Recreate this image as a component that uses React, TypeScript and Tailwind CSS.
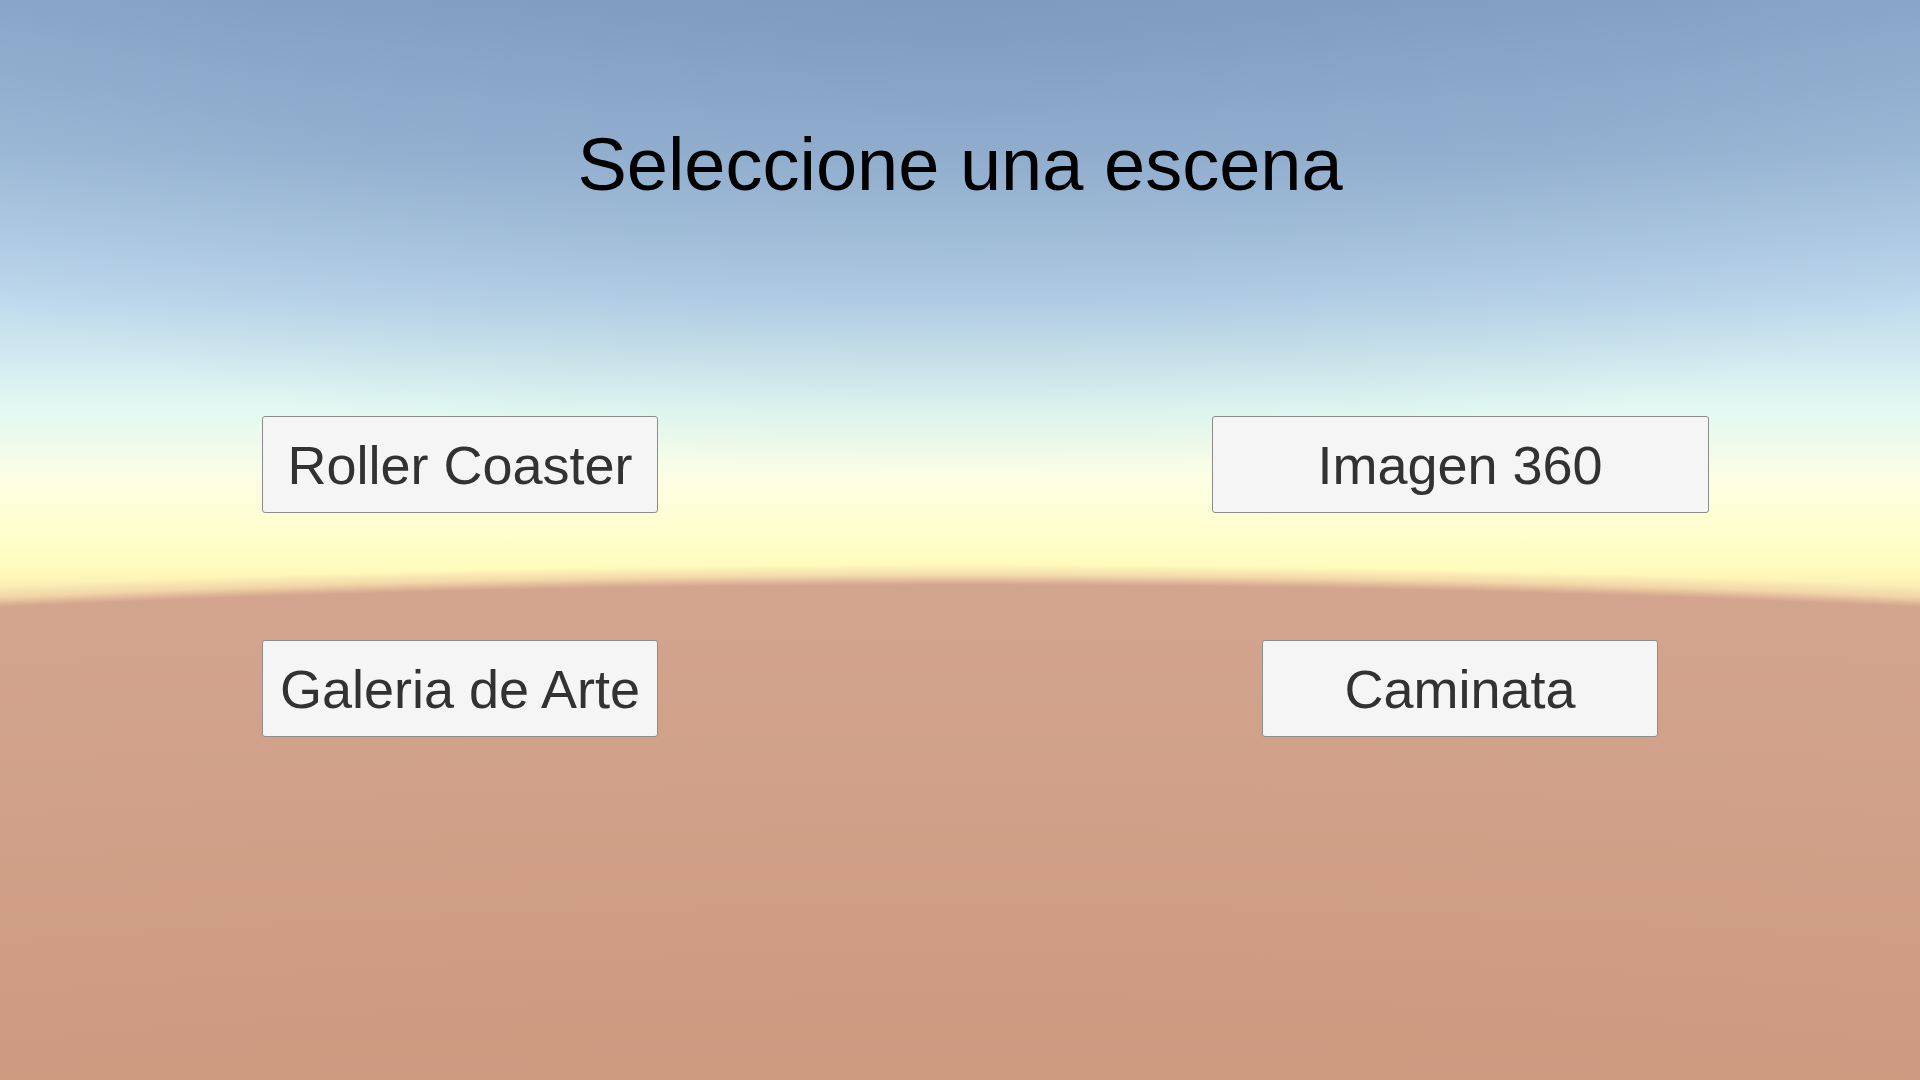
const scenes = [
  { label: "Roller Coaster", width: "w-[396px]" },
  { label: "Imagen 360", width: "w-[497px]" },
  { label: "Galeria de Arte", width: "w-[396px]" },
  { label: "Caminata", width: "w-[396px]" },
];

function SceneButton({ label, width }: { label: string; width: string }) {
  return (
    <button
      className={`${width} h-[97px] flex items-center justify-center rounded-[3px] border border-[#8c8c8c] bg-[#f5f5f5] text-[54px] leading-none text-[#323232]`}
    >
      {label}
    </button>
  );
}

export default function App() {
  return (
    <div
      className="h-[1080px] w-full overflow-hidden flex flex-col items-center pt-[128px] font-['Liberation_Sans',Arial,sans-serif] bg-[radial-gradient(ellipse_4100px_800px_at_50%_1385px,#cc9a7f_38%,#d3a48e_98%,#d3a48e_100%,rgba(240,208,165,0.75)_101.2%,rgba(250,225,175,0)_102.6%),radial-gradient(ellipse_1300px_470px_at_50%_0px,rgba(70,100,150,0.25)_0%,rgba(70,100,150,0.16)_55%,rgba(70,100,150,0)_100%),linear-gradient(to_bottom,#90accd_0px,#a2bedb_150px,#bfdaed_300px,#e2f9f2_410px,#fbfde4_475px,#fffecb_540px,#fffbbb_570px,#f5dcaa_610px,#f5dcaa_100%)]"
    >
      <h1 className="text-[74px] leading-none text-black">Seleccione una escena</h1>

      <div className="mt-[214px] grid grid-cols-[600px_600px] gap-x-[400px] gap-y-[127px] justify-items-center">
        {scenes.map((s) => (
          <SceneButton key={s.label} label={s.label} width={s.width} />
        ))}
      </div>
    </div>
  );
}
